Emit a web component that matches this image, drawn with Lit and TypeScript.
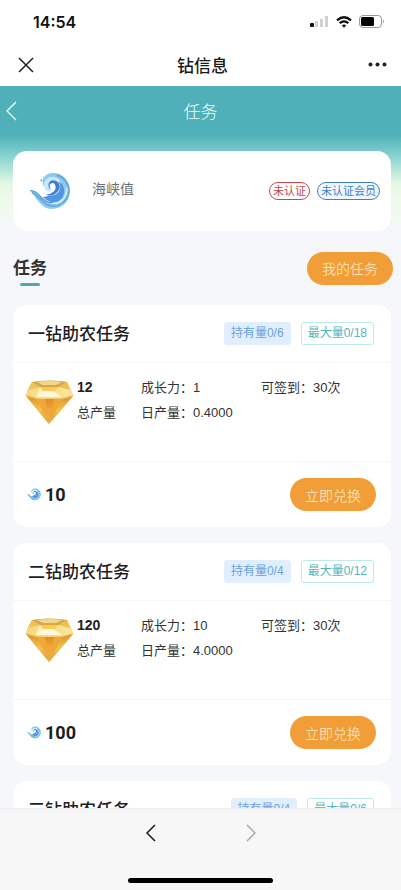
import { LitElement, html, css, svg } from "lit";
import { customElement, property } from "lit/decorators.js";

interface Task {
  title: string;
  held: string;
  max: string;
  total: string;
  growth: string;
  daily: string;
  checkIn: string;
  price: string;
}

const TASKS: Task[] = [
  { title: "一钻助农任务", held: "0/6", max: "0/18", total: "12", growth: "1", daily: "0.4000", checkIn: "30次", price: "10" },
  { title: "二钻助农任务", held: "0/4", max: "0/12", total: "120", growth: "10", daily: "4.0000", checkIn: "30次", price: "100" },
  { title: "三钻助农任务", held: "0/4", max: "0/6", total: "1200", growth: "100", daily: "40.0000", checkIn: "30次", price: "1000" },
];

const waveShapes = svg`
  <path d="M1 18C8 18 11 24 17 28C24 32 32 27 33 19C34 11 29 5 23 5C17 5 14 10 15 15C11 9 14 2 22 1C32 0 40 8 40 18C40 29 32 36 22 36C12 36 8 26 1 18Z" fill="#8ccbee"/>
  <path d="M19 23C28 24 34 16 28 8C37 13 36 25 28 29C22 32 16 28 12 24C15 25 17 24 19 23Z" fill="#5196e2"/>
  <path d="M22 8C30 7 32 15 28 19C25 23 20 24 16 22C21 22 26 19 26 15C26 12 24 10 22 11C19 12 20 16 22 17C17 17 17 9 22 8Z" fill="#3d7dd3"/>
  <path d="M22 5C17 5 14 10 15 15C16 19 20 20 22 18C18 16 18 10 22 8C26 7 29 9 30 12C29 7 26 5 22 5Z" fill="#c6e7f6"/>
  <path d="M1 18C9 18 12 27 21 30C30 32 37 26 37 15" fill="none" stroke="#d5f0fb" stroke-width="1.500"/>
  <path d="M3 20C10 23 12 31 21 33C31 35 39 27 39 17C38 10 33 4 27 3" fill="none" stroke="#5ea6dc" stroke-width="1.500"/>
  <path d="M1 18C6 18 9 21 12 25C15 28 19 30 23 30" fill="none" stroke="#458fcb" stroke-width="1"/>
  <circle cx="12" cy="8" r="1" fill="#9aa9b0"/>
  <circle cx="14" cy="5" r="1" fill="#cde7f4"/>`;

@customElement("wave-icon")
export class WaveIcon extends LitElement {
  static styles = css`
    :host { display: block; flex: none; }
    .art { display: block; width: 100%; height: 100%; }
  `;
  render() {
    return html`<svg class="art" viewBox="0 0 41 37" aria-hidden="true">${waveShapes}</svg>`;
  }
}

@customElement("diamond-icon")
export class DiamondIcon extends LitElement {
  static styles = css`
    :host { display: block; flex: none; width: 47px; height: 44px; }
    .art { display: block; width: 100%; height: 100%; }
  `;
  render() {
    return html`<svg class="art" viewBox="0 0 47 44" aria-hidden="true">
      <defs>
        <linearGradient id="base" x1="0" y1="0" x2="0" y2="1">
          <stop offset="0" stop-color="#e58a26" /><stop offset="0.45" stop-color="#f2a83a" /><stop offset="1" stop-color="#e6b03c" />
        </linearGradient>
        <linearGradient id="side" x1="0" y1="0" x2="0" y2="1">
          <stop offset="0" stop-color="#d99228" /><stop offset="0.5" stop-color="#f4c24f" /><stop offset="1" stop-color="#d39a2c" />
        </linearGradient>
        <linearGradient id="girdle" x1="0" y1="0" x2="1" y2="0">
          <stop offset="0" stop-color="#edc353" /><stop offset="0.5" stop-color="#fbe8a4" /><stop offset="1" stop-color="#f0c24e" />
        </linearGradient>
      </defs>
      <path d="M6 2Q23-1 41 2Q44 7 47 15Q46 18 23 44Q1 18 0 15Q2 7 6 2Z" fill="url(#girdle)" />
      <path d="M0 16L11 19L23 44Z" fill="url(#side)" />
      <path d="M47 16L36 19L23 44Z" fill="url(#side)" />
      <path d="M11 19H36L23 44Z" fill="url(#base)" />
      <path d="M11 19L23 44L19 19Z" fill="#f0a83b" />
      <path d="M28 19H36L23 44Z" fill="#eda83a" />
      <path d="M6 2L14 7L9 18L0 15Z" fill="#f7dc86" />
      <path d="M6 2L3 10L14 7Z" fill="#ebc25b" />
      <path d="M41 2L33 7L38 18L47 15Z" fill="#fae39a" />
      <path d="M41 2L44 10L33 7Z" fill="#eebe4f" />
      <path d="M6 2Q23-1 41 2L33 7H14Z" fill="#d9a845" />
      <path d="M11 2Q23 0 36 2L30 5H17Z" fill="#f2d790" />
      <path d="M14 7H33L38 18H9Z" fill="#f6cb57" />
      <path d="M14 7L18 12L9 18Z" fill="#fff0bc" />
      <path d="M33 7L27 12L38 18Z" fill="#fbe08c" />
      <path d="M18 11L27 11L38 18H9Z" fill="#fff8dc" />
      <path d="M0 16L9 18H38L47 16" fill="none" stroke="#f6ba50" stroke-width="1" />
    </svg>`;
  }
}

@customElement("task-card")
export class TaskCard extends LitElement {
  @property({ attribute: false }) task!: Task;

  static styles = css`
    :host { display: block; background: #fff; border-radius: 14px; }
    .head {
      display: flex; align-items: center; gap: 10px;
      height: 57px; padding: 0 17px 0 15px; border-bottom: 1px solid #f5f6f8;
    }
    .title { flex: 1; margin: 0; padding-top: 2px; font-size: 17px; line-height: 24px; font-weight: 500; color: #1d1d1f; }
    .tag { font-size: 12px; line-height: 21px; padding: 0 6px; border: 1px solid; border-radius: 3px; white-space: nowrap; }
    .held { color: #69a2de; background: #e1eefd; border-color: #e1eefd; }
    .max { color: #52b6bd; border-color: #bfe9ea; }
    .body { display: flex; height: 99px; padding: 12px 13px 0; box-sizing: border-box; border-bottom: 1px solid #f5f6f8; }
    diamond-icon { margin-top: 5px; }
    .facts {
      flex: 1; display: grid; grid-template-columns: 64px 120px 1fr; align-content: start;
      margin: 0 0 0 4px; font-size: 13px; line-height: 25px; color: #333; white-space: nowrap;
    }
    .total { display: flex; flex-direction: column-reverse; grid-row: span 2; }
    .fact { display: flex; }
    .daily { grid-column: 2; }
    dt, dd { margin: 0; }
    .sum { font-size: 14px; font-weight: 700; color: #222; }
    .foot { display: flex; align-items: center; gap: 4px; height: 65px; padding: 0 15px 0 14px; }
    wave-icon { width: 14px; height: 13px; }
    .price { flex: 1; font-family: Roboto, "Liberation Sans", sans-serif; font-size: 18px; font-weight: 700; line-height: 24px; color: #1c1c1e; }
    .buy {
      height: 33px; padding: 0 15px; border: 0; border-radius: 17px; cursor: pointer;
      background: #f19e38; color: #fff2d5; font: inherit; font-size: 14px; font-weight: 300;
    }
  `;

  render() {
    const t = this.task;
    return html`
      <header class="head">
        <h3 class="title">${t.title}</h3>
        <span class="tag held">持有量${t.held}</span>
        <span class="tag max">最大量${t.max}</span>
      </header>
      <div class="body">
        <diamond-icon></diamond-icon>
        <dl class="facts">
          <div class="total"><dt>总产量</dt><dd class="sum">${t.total}</dd></div>
          <div class="fact"><dt>成长力：</dt><dd>${t.growth}</dd></div>
          <div class="fact"><dt>可签到：</dt><dd>${t.checkIn}</dd></div>
          <div class="fact daily"><dt>日产量：</dt><dd>${t.daily}</dd></div>
        </dl>
      </div>
      <footer class="foot">
        <wave-icon></wave-icon>
        <span class="price">${t.price}</span>
        <button class="buy" type="button">立即兑换</button>
      </footer>`;
  }
}

@customElement("app-root")
export class AppRoot extends LitElement {
  static styles = css`
    :host {
      display: flex; flex-direction: column; height: 100vh; overflow: hidden; background: #fff;
      font-family: "Liberation Sans", "Noto Sans CJK SC", sans-serif; color: #222;
    }
    button { font: inherit; cursor: pointer; }
    .icon-button { display: flex; padding: 0; border: 0; background: none; color: inherit; }
    .status { flex: none; display: flex; align-items: center; justify-content: space-between; height: 43px; padding: 0 16px 0 33px; }
    .clock { font-family: Inter, "Liberation Sans", sans-serif; font-size: 16px; font-weight: 600; color: #111; }
    .signals { display: flex; align-items: center; gap: 7px; }
    .wechat { flex: none; display: grid; grid-template-columns: 1fr auto 1fr; align-items: center; height: 43px; padding: 0 14px 0 18px; }
    .wechat-title { font-size: 17px; font-weight: 500; color: #1a1a1a; }
    .more { justify-self: end; }
    .page {
      flex: 1; min-height: 0; overflow: hidden;
      background: linear-gradient(#4fb0b9 0, #4fb0b9 48px, #6fc6c8 62px, #a9e0d8 80px, #e4f8e4 98px, #eefaea 112px, #f6f7fb 150px);
    }
    .bar { display: grid; grid-template-columns: 1fr auto 1fr; align-items: center; height: 49px; padding: 0 6px; color: #f0ffff; }
    .bar-title { margin: 0; font-size: 17px; font-weight: 300; }
    .content { padding: 16px 10px 0 13px; }
    .profile {
      display: flex; align-items: center; gap: 7px; height: 80px; padding: 0 11px 0 16px;
      box-sizing: border-box; background: #fff; border-radius: 14px;
    }
    .avatar { width: 42px; height: 38px; }
    .coin { flex: 1; margin: 0 0 4px 14px; font-size: 14px; line-height: 20px; color: #6b7178; }
    .pill { font-size: 11px; line-height: 16px; padding: 0 3px; border: 1px solid; border-radius: 9px; white-space: nowrap; }
    .red { color: #c9454b; }
    .blue { color: #3f7fce; background: #eff7ff; }
    .section { display: flex; align-items: center; justify-content: space-between; height: 34px; margin: 20px -2px 20px 0; }
    .heading { margin: 0; padding-top: 2px; font-size: 17px; line-height: 24px; font-weight: 700; color: #333; }
    .heading::after { content: ""; display: block; width: 20px; height: 3px; margin: 2px auto -4px; border-radius: 2px; background: #49a9ae; }
    .mine { height: 33px; padding: 0 15px; border: 0; border-radius: 17px; background: #f19e38; color: #fff2d5; font-size: 14px; font-weight: 300; }
    .tasks { display: grid; gap: 16px; }
    .toolbar {
      flex: none; display: flex; flex-direction: column; align-items: center; justify-content: space-between;
      height: 82px; box-sizing: border-box; padding: 14px 0 7px; border-top: 1px solid #ededef; background: #f7f7f7;
    }
    .history { display: flex; gap: 88px; }
    .back { color: #1b1b1b; }
    .forward { color: #a2a2a2; }
    .home { width: 36%; height: 5px; border-radius: 3px; background: #000; }
  `;

  render() {
    return html`
      <div class="status">
        <span class="clock">14:54</span>
        <div class="signals">
          <svg width="19" height="13" viewBox="0 0 19 13" aria-hidden="true">
            <rect x="0" y="8" width="4" height="4" rx="1" fill="#111" />
            <path d="M5 6h3v6H5zM10 4h3v8h-3zM15 1h3v11h-3z" fill="#d2d2d2" />
          </svg>
          <svg width="16" height="12" viewBox="0 0 16 12" fill="none" stroke="#111" stroke-width="2.200" aria-hidden="true">
            <path d="M1 4.300Q8-1.800 15 4.300M3.600 7.200Q8 3.400 12.400 7.200" />
            <path d="M5.800 9.300Q8 7.500 10.200 9.300L8 11.700Z" fill="#111" stroke="none" />
          </svg>
          <svg width="26" height="13" viewBox="0 0 26 13" aria-hidden="true">
            <rect x="0.500" y="0.500" width="22" height="12" rx="3.500" fill="none" stroke="#999" />
            <rect x="2" y="2" width="13" height="9" rx="1.500" fill="#000" />
            <path d="M24 4.500Q26 6.500 24 8.500Z" fill="#999" />
          </svg>
        </div>
      </div>
      <nav class="wechat">
        <button class="icon-button" type="button" aria-label="关闭">
          <svg width="16" height="16" viewBox="0 0 16 16" fill="none" stroke="#222" stroke-width="1.500"><path d="M1 1L15 15M15 1L1 15" /></svg>
        </button>
        <span class="wechat-title">钻信息</span>
        <button class="icon-button more" type="button" aria-label="更多">
          <svg width="19" height="5" viewBox="0 0 19 5" fill="#222"><circle cx="2.500" cy="2.500" r="2" /><circle cx="9.500" cy="2.500" r="2" /><circle cx="16.500" cy="2.500" r="2" /></svg>
        </button>
      </nav>
      <main class="page">
        <header class="bar">
          <button class="icon-button" type="button" aria-label="返回">
            <svg width="11" height="20" viewBox="0 0 11 20" fill="none" stroke="currentColor" stroke-width="1.300"><path d="M10 1L1 10L10 19" /></svg>
          </button>
          <h1 class="bar-title">任务</h1>
        </header>
        <div class="content">
          <section class="profile">
            <wave-icon class="avatar"></wave-icon>
            <p class="coin">海峡值</p>
            <span class="pill red">未认证</span>
            <span class="pill blue">未认证会员</span>
          </section>
          <div class="section">
            <h2 class="heading">任务</h2>
            <button class="mine" type="button">我的任务</button>
          </div>
          <div class="tasks">${TASKS.map((t) => html`<task-card .task=${t}></task-card>`)}</div>
        </div>
      </main>
      <div class="toolbar">
        <div class="history">
          <button class="icon-button back" type="button" aria-label="后退">
            <svg width="12" height="20" viewBox="0 0 12 20" fill="none" stroke="currentColor" stroke-width="1.500"><path d="M10 2L2 10L10 18" /></svg>
          </button>
          <button class="icon-button forward" type="button" aria-label="前进">
            <svg width="12" height="20" viewBox="0 0 12 20" fill="none" stroke="currentColor" stroke-width="1.300"><path d="M2 2L10 10L2 18" /></svg>
          </button>
        </div>
        <div class="home"></div>
      </div>`;
  }
}
